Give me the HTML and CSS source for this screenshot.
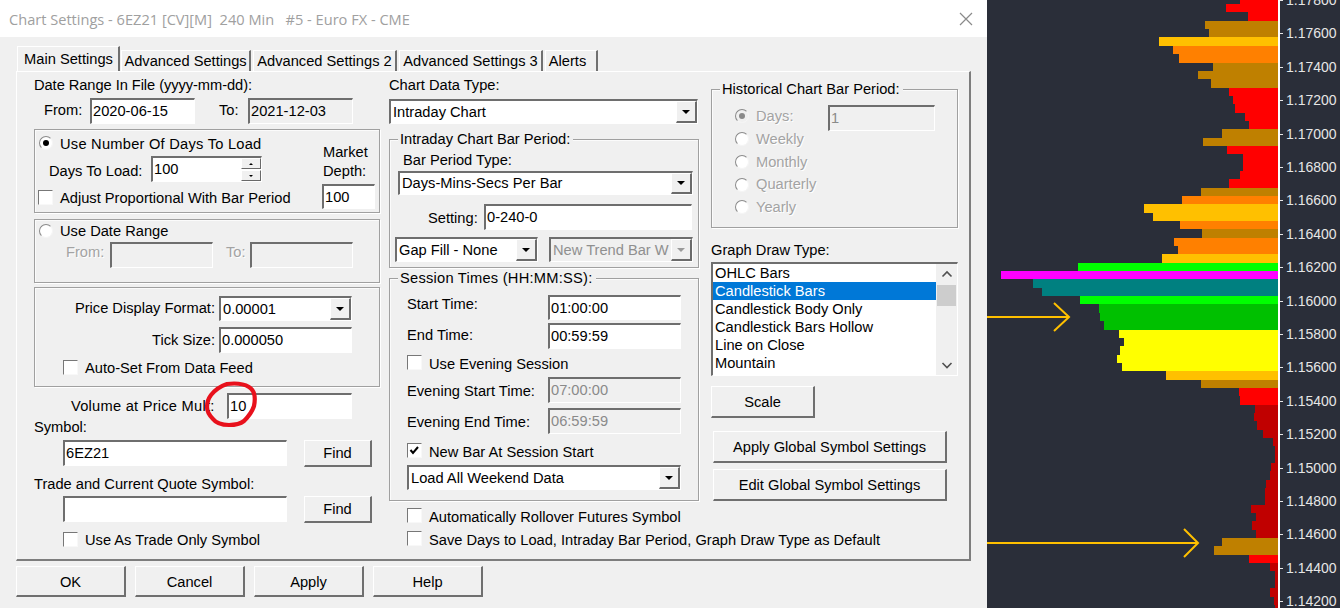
FILE: index.html
```html
<!DOCTYPE html>
<html lang="en">
<head>
<meta charset="utf-8">
<title>Chart Settings</title>
<link rel="stylesheet" href="styles.css">
</head>
<body>
<main class="screen">
<section class="dialog">
  <header class="titlebar">
    <span class="title">Chart Settings - 6EZ21 [CV][M]&nbsp; 240 Min &nbsp; #5 - Euro FX - CME</span>
    <svg class="close" width="14" height="14" viewBox="0 0 14 14"><path d="M1 1L13 13M13 1L1 13" stroke="#8a8a8a" stroke-width="1.2" fill="none"/></svg>
  </header>
  <nav class="tabs">
    <div class="tab tab-on w103">Main Settings</div>
    <div class="tab w130">Advanced Settings</div>
    <div class="tab w144">Advanced Settings 2</div>
    <div class="tab w144">Advanced Settings 3</div>
    <div class="tab tab-last w54">Alerts</div>
  </nav>
  <div class="panel">
    <div class="col col1">
      <div class="row h26 tight">Date Range In File (yyyy-mm-dd):</div>
      <div class="row h26 pl10">
        <span class="lab w46 up1">From:</span><div class="input w105">2020-06-15</div>
        <span class="lab w29 ml24 up1">To:</span><div class="input ro w105">2021-12-03</div>
      </div>
      <div class="group g1 mt5">
        <div class="g1-left">
          <div class="row h18 pl4 gap7"><span class="radio on"></span><span class="dn1 spaced">Use Number Of Days To Load</span></div>
          <div class="row h26 mt4 pl14">
            <span class="lab w102 dn2">Days To Load:</span>
            <div class="input w111 spin-host">
              <span class="grow">100</span>
              <span class="spin"><span class="spin-btn"><i class="tri-up"></i></span><span class="spin-btn"><i class="tri-dn"></i></span></span>
            </div>
          </div>
          <div class="row h15 mt8 pl3 gap7"><span class="check"></span><span class="dn1">Adjust Proportional With Bar Period</span></div>
        </div>
        <div class="g1-right">
          <div class="market">Market<br>Depth:</div>
          <div class="input h25 mt3">100</div>
        </div>
      </div>
      <div class="group g2 mt6">
        <div class="row h18 mt2 pl4 gap7"><span class="radio"></span><span>Use Date Range</span></div>
        <div class="row h26 mt2 pl31">
          <span class="lab w44 off up3">From:</span><div class="input ro w103"></div>
          <span class="lab w24 ml13 off up3">To:</span><div class="input ro w103"></div>
        </div>
      </div>
      <div class="group g3 mt4">
        <div class="row h25 mt8">
          <span class="lab w180 right">Price Display Format:</span>
          <div class="combo w133 ml4"><span class="grow">0.00001</span><span class="drop"><i class="tri-big"></i></span></div>
        </div>
        <div class="row h26 mt6">
          <span class="lab w180 right">Tick Size:</span>
          <div class="input w133 ml4">0.000050</div>
        </div>
        <div class="row h15 mt7 pl28 gap7"><span class="check"></span><span class="dn1">Auto-Set From Data Feed</span></div>
      </div>
      <div class="row h26 mt6 pl37">
        <span class="lab w156 spaced">Volume at Price Mult:</span><div class="input w125">10</div>
      </div>
      <div class="row h17">Symbol:</div>
      <div class="row h26 mt4 pl29">
        <div class="input w224">6EZ21</div><button class="btn find ml17">Find</button>
      </div>
      <div class="row h18 mt9">Trade and Current Quote Symbol:</div>
      <div class="row h26 mt3 pl29">
        <div class="input w224"></div><button class="btn find ml17">Find</button>
      </div>
      <div class="row h15 mt10 pl29 gap7"><span class="check"></span><span class="dn1">Use As Trade Only Symbol</span></div>
    </div>

    <div class="col col2">
      <div class="row h26">Chart Data Type:</div>
      <div class="combo h25 mt1 w309"><span class="grow">Intraday Chart</span><span class="drop"><i class="tri-big"></i></span></div>
      <div class="group g4 mt15">
        <span class="legend">Intraday Chart Bar Period:</span>
        <div class="row h18 mt11 pl13">Bar Period Type:</div>
        <div class="combo h24 mt2 ml8 w295"><span class="grow">Days-Mins-Secs Per Bar</span><span class="drop"><i class="tri-big"></i></span></div>
        <div class="row h26 mt9 pl38"><span class="lab w56 dn1">Setting:</span><div class="input w208">0-240-0</div></div>
        <div class="row h25 mt7 pl5">
          <div class="combo w143 fill"><span class="grow">Gap Fill - None</span><span class="drop"><i class="tri-big"></i></span></div>
          <div class="combo combo-off w144 ml11 fill"><span class="grow clip">New Trend Bar W</span><span class="drop"><i class="tri-big tri-off"></i></span></div>
        </div>
      </div>
      <div class="group g5 mt10">
        <span class="legend spaced">Session Times (HH:MM:SS):</span>
        <div class="row h25 mt16 pl17"><span class="lab w141 up3">Start Time:</span><div class="input w133">01:00:00</div></div>
        <div class="row h26 mt3 pl17"><span class="lab w141 up1">End Time:</span><div class="input w133">00:59:59</div></div>
        <div class="row h15 mt6 pl17 gap7"><span class="check"></span><span class="dn2">Use Evening Session</span></div>
        <div class="row h26 mt7 pl17"><span class="lab w141 dn1">Evening Start Time:</span><div class="input ro dim w133">07:00:00</div></div>
        <div class="row h26 mt5 pl17"><span class="lab w141 dn1">Evening End Time:</span><div class="input ro dim w133">06:59:59</div></div>
        <div class="row h15 mt9 pl17 gap7"><span class="check checked"><svg width="13" height="13" viewBox="0 0 13 13"><path d="M2.5 6L5 9L10 3" stroke="#000" stroke-width="2" fill="none"/></svg></span><span class="dn2">New Bar At Session Start</span></div>
        <div class="combo h25 mt7 ml17 w274"><span class="grow">Load All Weekend Data</span><span class="drop"><i class="tri-big"></i></span></div>
      </div>
      <div class="row h15 mt7 pl18 gap7"><span class="check"></span><span class="dn2">Automatically Rollover Futures Symbol</span></div>
      <div class="row h15 mt8 pl18 gap7 nowrap"><span class="check"></span><span class="dn2">Save Days to Load, Intraday Bar Period, Graph Draw Type as Default</span></div>
    </div>

    <div class="col col3">
      <div class="group g6 mt17">
        <span class="legend">Historical Chart Bar Period:</span>
        <div class="hist-radios">
          <div class="hist-row"><span class="radio on off-radio"></span><span class="off">Days:</span></div>
          <div class="hist-row"><span class="radio"></span><span class="off">Weekly</span></div>
          <div class="hist-row"><span class="radio"></span><span class="off">Monthly</span></div>
          <div class="hist-row"><span class="radio"></span><span class="off">Quarterly</span></div>
          <div class="hist-row"><span class="radio"></span><span class="off">Yearly</span></div>
        </div>
        <div class="input ro dim w107 h26 mt15">1</div>
      </div>
      <div class="row h18 mt13">Graph Draw Type:</div>
      <div class="listbox mt3">
        <ul class="items">
          <li>OHLC Bars</li>
          <li class="sel">Candlestick Bars</li>
          <li>Candlestick Body Only</li>
          <li>Candlestick Bars Hollow</li>
          <li>Line on Close</li>
          <li>Mountain</li>
        </ul>
        <div class="scroll">
          <svg width="20" height="20" viewBox="0 0 20 20"><path d="M5.5 12.5L10 8L14.5 12.5" stroke="#505050" stroke-width="1.6" fill="none"/></svg>
          <div class="thumb"></div>
          <svg class="scroll-down" width="20" height="20" viewBox="0 0 20 20"><path d="M5.5 8L10 12.5L14.5 8" stroke="#505050" stroke-width="1.6" fill="none"/></svg>
        </div>
      </div>
      <button class="btn scale mt10">Scale</button>
      <button class="btn wide mt13">Apply Global Symbol Settings</button>
      <button class="btn wide mt6">Edit Global Symbol Settings</button>
    </div>
  </div>
  <footer class="actions">
    <button class="btn act">OK</button>
    <button class="btn act">Cancel</button>
    <button class="btn act">Apply</button>
    <button class="btn act">Help</button>
  </footer>
  <svg class="ring" width="60" height="56" viewBox="0 0 60 56"><path d="M25 5C33 4 42 5 47 8C52 11 54 17 52 27C50 33 46 38 42 42C37 46 32 46 27 46C20 46 14 44 11 40C7 36 5 32 5 28C5 23 6 20 9 16C13 11 19 7 25 5Z" fill="none" stroke="#e8111c" stroke-width="4.2" stroke-linecap="round" stroke-linejoin="round"/></svg>
</section>

<section class="chart">
  <div class="profile">
    <i class="bar red" style="width:38px"></i><i class="bar red" style="width:52px"></i><i class="bar red" style="width:30px"></i>
    <i class="bar brown" style="width:73px"></i><i class="bar brown" style="width:69px"></i><i class="bar amber" style="width:119px"></i>
    <i class="bar orange" style="width:105px"></i><i class="bar orange" style="width:99px"></i><i class="bar brown" style="width:65px"></i>
    <i class="bar brown" style="width:80px"></i><i class="bar brown" style="width:67px"></i><i class="bar red" style="width:49px"></i>
    <i class="bar red" style="width:45px"></i><i class="bar red" style="width:43px"></i><i class="bar red" style="width:33px"></i>
    <i class="bar red" style="width:29px"></i><i class="bar brown" style="width:56px"></i><i class="bar brown" style="width:75px"></i>
    <i class="bar red" style="width:51px"></i><i class="bar red" style="width:35px"></i><i class="bar red" style="width:35px"></i>
    <i class="bar red" style="width:38px"></i><i class="bar red" style="width:49px"></i><i class="bar brown" style="width:77px"></i>
    <i class="bar orange" style="width:96px"></i><i class="bar amber" style="width:134px"></i><i class="bar amber" style="width:125px"></i>
    <i class="bar orange" style="width:98px"></i><i class="bar brown" style="width:76px"></i><i class="bar orange" style="width:104px"></i>
    <i class="bar orange" style="width:100px"></i><i class="bar amber" style="width:116px"></i><i class="bar lime" style="width:200px"></i>
    <i class="bar magenta" style="width:277px"></i><i class="bar teal" style="width:245px"></i><i class="bar teal" style="width:236px"></i>
    <i class="bar lime" style="width:198px"></i><i class="bar green" style="width:179px"></i><i class="bar green" style="width:178px"></i>
    <i class="bar green" style="width:174px"></i><i class="bar yellow" style="width:159px"></i><i class="bar yellow" style="width:154px"></i>
    <i class="bar yellow" style="width:158px"></i><i class="bar yellow" style="width:161px"></i><i class="bar yellow" style="width:156px"></i>
    <i class="bar amber" style="width:112px"></i><i class="bar brown" style="width:77px"></i><i class="bar red" style="width:39px"></i>
    <i class="bar red" style="width:38px"></i><i class="bar dark" style="width:23px"></i><i class="bar dark" style="width:24px"></i>
    <i class="bar dark" style="width:21px"></i><i class="bar dark" style="width:15px"></i><i class="bar dark" style="width:5px"></i>
    <i class="bar dark" style="width:3px"></i><i class="bar dark" style="width:3px"></i><i class="bar dark" style="width:7px"></i>
    <i class="bar dark" style="width:8px"></i><i class="bar dark" style="width:12px"></i><i class="bar dark" style="width:13px"></i>
    <i class="bar dark" style="width:13px"></i><i class="bar dark" style="width:27px"></i><i class="bar dark" style="width:22px"></i>
    <i class="bar dark" style="width:26px"></i><i class="bar dark" style="width:22px"></i><i class="bar brown" style="width:56px"></i>
    <i class="bar brown" style="width:64px"></i><i class="bar red" style="width:29px"></i><i class="bar dark" style="width:8px"></i>
    <i class="bar dark" style="width:3px"></i><i class="bar dark" style="width:3px"></i><i class="bar dark" style="width:8px"></i>
    <i class="bar dark" style="width:4px"></i><i class="bar dark" style="width:3px"></i>
  </div>
  <div class="axis">
    <div class="tick">1.17800</div><div class="tick">1.17600</div><div class="tick">1.17400</div>
    <div class="tick">1.17200</div><div class="tick">1.17000</div><div class="tick">1.16800</div>
    <div class="tick">1.16600</div><div class="tick">1.16400</div><div class="tick">1.16200</div>
    <div class="tick">1.16000</div><div class="tick">1.15800</div><div class="tick">1.15600</div>
    <div class="tick">1.15400</div><div class="tick">1.15200</div><div class="tick">1.15000</div>
    <div class="tick">1.14800</div><div class="tick">1.14600</div><div class="tick">1.14400</div>
    <div class="tick">1.14200</div>
  </div>
  <svg class="arrows" width="292" height="608" viewBox="0 0 292 608">
    <path d="M0 317H81M67 303L82 317L67 331" fill="none" stroke="#ffc000" stroke-width="2"/>
    <path d="M0 543H210M197 529L211 543L197 557" fill="none" stroke="#ffc000" stroke-width="2"/>
  </svg>
</section>
</main>
</body>
</html>
```

FILE: styles.css
```css
* { box-sizing: border-box; }
html, body { margin: 0; padding: 0; }
body { width: 1340px; height: 608px; overflow: hidden; background: #2a2e39; }
.screen { display: flex; width: 1340px; height: 608px; overflow: hidden; }

.dialog {
  position: relative;
  width: 987px; height: 608px; flex: none;
  background: #f0f0f0;
  font: 14.67px/1 "Liberation Sans", Arial, sans-serif;
  color: #000;
  display: flex; flex-direction: column;
}
.titlebar {
  height: 37px; flex: none; background: #fff;
  display: flex; align-items: center; justify-content: space-between;
  padding: 0 14px 0 9px;
}
.title { font: 14.6px "Open Sans", sans-serif; color: #a0a0a0; white-space: nowrap; }
.tabs { height: 34px; flex: none; display: flex; align-items: flex-end; padding-left: 17px; gap: 1px; }
.tab {
  height: 21px; display: flex; align-items: center; justify-content: center;
  border-top: 1px solid #fff; border-left: 1px solid #fff; border-right: 2px solid #707070;
  white-space: nowrap; padding-top: 1px; margin-right: 1px;
}
.tab-on { height: 25px; margin-right: 0; padding-bottom: 1px; padding-left: 1px; }
.tab-last { padding-right: 7px; }
.panel {
  margin-left: 16px; width: 955px; height: 490px; flex: none;
  border-top: 1px solid #fff; border-left: 1px solid #fff;
  border-right: 2px solid #7d7d7d; border-bottom: 2px solid #7d7d7d;
  padding-left: 17px; display: flex;
}
.col { display: flex; flex-direction: column; flex: none; }
.col1 { width: 346px; }
.col2 { width: 310px; margin-left: 9px; }
.col3 { width: 247px; margin-left: 12px; }
.actions { display: flex; gap: 9px; padding-left: 16px; margin-top: 5px; }

.row { display: flex; align-items: center; flex: none; white-space: nowrap; }
.grow { flex: 1; min-width: 0; }
.clip { overflow: hidden; }
.nowrap { white-space: nowrap; }
.lab { flex: none; display: block; }
.right { text-align: right; }
.off { color: #a3a3a3; text-shadow: 1px 1px 0 #fff; }
.spaced { letter-spacing: 0.24px; }
.tight { letter-spacing: -0.06px; }
.up1 { padding-bottom: 2px; }
.up3 { padding-bottom: 6px; }
.dn1 { padding-top: 2px; }
.dn2 { padding-top: 4px; }

.h15 { height: 15px; } .h17 { height: 17px; } .h18 { height: 18px; }
.h24 { height: 24px; } .h25 { height: 25px; } .h26 { height: 26px; }
.mt1 { margin-top: 1px; } .mt2 { margin-top: 2px; } .mt3 { margin-top: 3px; }
.mt4 { margin-top: 4px; } .mt5 { margin-top: 5px; } .mt6 { margin-top: 6px; }
.mt7 { margin-top: 7px; } .mt8 { margin-top: 8px; } .mt9 { margin-top: 9px; }
.mt10 { margin-top: 10px; } .mt11 { margin-top: 11px; } .mt13 { margin-top: 13px; }
.mt15 { margin-top: 15px; } .mt16 { margin-top: 16px; } .mt17 { margin-top: 17px; }
.ml4 { margin-left: 4px; } .ml8 { margin-left: 8px; } .ml11 { margin-left: 11px; }
.ml13 { margin-left: 13px; } .ml17 { margin-left: 17px; } .ml24 { margin-left: 24px; }
.pl3 { padding-left: 3px; } .pl4 { padding-left: 4px; } .pl5 { padding-left: 5px; }
.pl10 { padding-left: 10px; } .pl13 { padding-left: 13px; } .pl14 { padding-left: 14px; }
.pl17 { padding-left: 17px; } .pl18 { padding-left: 18px; } .pl28 { padding-left: 28px; }
.pl29 { padding-left: 29px; } .pl31 { padding-left: 31px; } .pl37 { padding-left: 37px; }
.pl38 { padding-left: 38px; }
.gap7 { gap: 7px; }
.w24 { width: 24px; } .w29 { width: 29px; } .w44 { width: 44px; } .w46 { width: 46px; }
.w54 { width: 53px; } .w56 { width: 56px; } .w102 { width: 102px; } .w103 { width: 103px; }
.w105 { width: 105px; } .w107 { width: 107px; } .w111 { width: 111px; } .w125 { width: 125px; }
.w130 { width: 130px; } .w133 { width: 133px; } .w141 { width: 141px; } .w143 { width: 143px; }
.w144 { width: 144px; } .w156 { width: 156px; } .w180 { width: 180px; } .w208 { width: 208px; }
.w224 { width: 224px; } .w274 { width: 274px; } .w295 { width: 295px; } .w309 { width: 309px; }

.group {
  position: relative; flex: none;
  border: 1px solid #a0a0a0; box-shadow: 1px 1px 0 #fff, inset 1px 1px 0 #fbfbfb;
}
.legend { position: absolute; left: 8px; top: -9px; background: #f0f0f0; padding: 0 3px 0 2px; line-height: 17px; white-space: nowrap; }
.g1 { height: 84px; display: flex; justify-content: space-between; padding-right: 4px; width: 346px; }
.g1-left { padding-top: 4px; display: flex; flex-direction: column; }
.g1-right { padding-top: 13px; width: 53px; display: flex; flex-direction: column; }
.market { line-height: 19px; padding-left: 1px; }
.g2 { height: 64px; width: 346px; }
.g3 { height: 100px; width: 346px; }
.g4 { height: 129px; width: 310px; }
.g5 { height: 223px; width: 310px; }
.g6 { height: 139px; width: 247px; display: flex; }
.hist-radios { width: 116px; padding: 15px 0 0 23px; flex: none; }
.hist-row { height: 22.75px; display: flex; align-items: center; gap: 7px; }

.input {
  flex: none; height: 100%; display: flex; align-items: center;
  background: #fff; padding-left: 1px;
  border-style: solid; border-width: 2px 1px 1px 2px;
  border-color: #6e6e6e #fff #fff #6e6e6e;
  white-space: nowrap;
}
.input.h26 { height: 26px; }
.input.h25 { height: 25px; }
.ro { background: #f0f0f0; }
.dim { color: #8a8a8a; }
.spin-host { padding-right: 0; }
.spin { width: 20px; height: 100%; display: flex; flex-direction: column; gap: 1px; }
.spin-btn {
  flex: 1; display: flex; align-items: center; justify-content: center;
  background: #f0f0f0; border-style: solid; border-width: 1px;
  border-color: #fff #696969 #696969 #fff;
}
.tri-up { width: 0; height: 0; border: 2px solid transparent; border-top: 0; border-bottom: 2px solid #000; }
.tri-dn { width: 0; height: 0; border: 2px solid transparent; border-bottom: 0; border-top: 2px solid #000; }

.combo {
  flex: none; display: flex; align-items: center;
  background: #fff; padding-left: 2px;
  border-style: solid; border-width: 2px 1px 1px 2px;
  border-color: #6e6e6e #fff #fff #6e6e6e;
  white-space: nowrap;
}
.fill { height: 100%; }
.row > .combo { height: 100%; }
.combo-off { background: #f0f0f0; color: #8f8f8f; }
.drop {
  width: 21px; height: 100%; flex: none;
  display: flex; align-items: center; justify-content: center;
  background: #f0f0f0;
  border-style: solid; border-width: 1px 2px 2px 1px;
  border-color: #fff #6b6b6b #6b6b6b #fff;
}
.tri-big { width: 0; height: 0; border: 4px solid transparent; border-bottom: 0; border-top: 4px solid #000; }
.tri-off { border-top-color: #9a9a9a; }

.check {
  width: 15px; height: 15px; flex: none; background: #fff;
  border-style: solid; border-width: 1px;
  border-color: #777 #f8f8f8 #f8f8f8 #777;
  display: block;
}
.check svg { display: block; }
.radio {
  width: 14px; height: 14px; flex: none; border-radius: 50%;
  background: #fff; border-style: solid; border-width: 1px;
  border-color: #8a8a8a #f5f5f5 #f5f5f5 #8a8a8a;
  display: flex; align-items: center; justify-content: center;
}
.radio.on::after { content: ""; width: 6px; height: 6px; border-radius: 50%; background: #000; }
.off-radio { background: #f0f0f0; }
.radio.off-radio::after { background: #8a8a8a; }

.btn {
  font: inherit; color: #000; background: #f0f0f0; padding: 2px 0 0; flex: none;
  border-style: solid; border-width: 1px 2px 2px 1px;
  border-color: #fff #6f6f6f #6f6f6f #fff;
  box-shadow: none; white-space: nowrap;
}
.find { width: 68px; height: 27px; }
.act { width: 110px; height: 31px; }
.scale { width: 104px; height: 32px; }
.wide { width: 234px; height: 32px; margin-left: 2px; }

.listbox {
  width: 247px; height: 114px; flex: none; display: flex; background: #fff;
  border-style: solid; border-width: 2px 1px 1px 2px;
  border-color: #6e6e6e #fff #fff #6e6e6e;
}
.items { list-style: none; margin: 0; padding: 0; flex: 1; }
.items li { height: 18px; line-height: 19px; padding-left: 2px; white-space: nowrap; }
.items .sel { background: #0078d7; color: #fff; }
.scroll { width: 21px; height: 111px; flex: none; background: #f0f0f0; display: flex; flex-direction: column; align-items: center; }
.scroll svg { display: block; flex: none; }
.thumb { width: 19px; height: 21px; background: #cdcdcd; margin-top: 1px; }
.scroll-down { margin-top: auto; }

.ring { position: absolute; left: 202px; top: 379px; pointer-events: none; }

.chart { position: relative; flex: 1; display: flex; overflow: hidden; background: #2a2e39; }
.profile {
  width: 291px; flex: none; display: flex; flex-direction: column; align-items: flex-end;
  margin-top: -4.25px; height: 620px;
}
.bar { display: block; height: 8.353px; flex: none; }
.red { background: #ff0000; }
.dark { background: #c00000; }
.brown { background: #bf8000; }
.orange { background: #ff8000; }
.amber { background: #ffc000; }
.yellow { background: #ffff00; }
.lime { background: #00ff00; }
.green { background: #00c000; }
.teal { background: #008080; }
.magenta { background: #ff00ff; }
.axis {
  width: 62px; flex: none; height: 660px; margin-top: -16.8px;
  border-left: 2px solid #fff;
  color: #e6e6e6;
  font: 14px "Liberation Sans", Arial, sans-serif;
}
.tick { position: relative; height: 33.41px; display: flex; align-items: center; padding-left: 6px; }
.tick::before { content: ""; position: absolute; left: 0; top: 50%; width: 3px; height: 1px; background: #e6e6e6; }
.arrows { position: absolute; left: 0; top: 0; pointer-events: none; }
```
